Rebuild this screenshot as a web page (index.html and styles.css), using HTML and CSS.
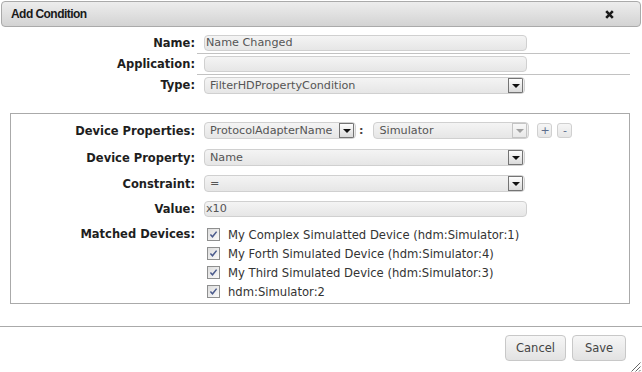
FILE: index.html
```html
<!DOCTYPE html>
<html>
<head>
<meta charset="utf-8">
<link rel="stylesheet" href="styles.css">
</head>
<body>
<div class="dialog">
  <div class="titlebar">
    <span class="title">Add Condition</span>
    <svg class="close" width="9" height="9" viewBox="0 0 9 9"><path d="M1.2 1.2L7.8 7.8M7.8 1.2L1.2 7.8" stroke="#1a1a1a" stroke-width="2.6"/></svg>
  </div>

  <div class="top-form">
    <div class="row">
      <div class="label">Name:</div>
      <div class="cell lined"><div class="input w-long">Name Changed</div></div>
    </div>
    <div class="row">
      <div class="label">Application:</div>
      <div class="cell lined"><div class="input w-long"></div></div>
    </div>
    <div class="row">
      <div class="label">Type:</div>
      <div class="cell"><div class="select w-sel"><span>FilterHDPropertyCondition</span><span class="arrow"></span></div></div>
    </div>
  </div>

  <div class="fieldset">
    <div class="frow">
      <div class="flabel">Device Properties:</div>
      <div class="fcell">
        <div class="select w-prop"><span class="clip">ProtocolAdapterName</span><span class="arrow"></span></div>
        <span class="colon">:</span>
        <div class="select w-sim"><span>Simulator</span><span class="arrow disabled"></span></div>
        <span class="mini plus">+</span>
        <span class="mini minus">-</span>
      </div>
    </div>
    <div class="frow r2">
      <div class="flabel">Device Property:</div>
      <div class="fcell"><div class="select w-sel"><span>Name</span><span class="arrow"></span></div></div>
    </div>
    <div class="frow r3">
      <div class="flabel">Constraint:</div>
      <div class="fcell"><div class="select w-sel"><span>=</span><span class="arrow"></span></div></div>
    </div>
    <div class="frow r4">
      <div class="flabel">Value:</div>
      <div class="fcell"><div class="input w-long">x10</div></div>
    </div>
    <div class="frow matched">
      <div class="flabel">Matched Devices:</div>
      <div class="fcell checks">
        <div class="check"><svg width="13" height="13" viewBox="0 0 13 13"><defs><linearGradient id="g" x1="0" y1="0" x2="1" y2="1"><stop offset="0" stop-color="#dcdcdc"/><stop offset="1" stop-color="#fbfbfb"/></linearGradient></defs><rect x="0.5" y="0.5" width="12" height="12" fill="url(#g)" stroke="#8e8f8f"/><path d="M3.4 6.4L5.5 8.8L9.6 3.6" fill="none" stroke="#4a5a8c" stroke-width="1.5"/></svg><span>My Complex Simulatted Device (hdm:Simulator:1)</span></div>
        <div class="check"><svg width="13" height="13" viewBox="0 0 13 13"><rect x="0.5" y="0.5" width="12" height="12" fill="url(#g)" stroke="#8e8f8f"/><path d="M3.4 6.4L5.5 8.8L9.6 3.6" fill="none" stroke="#4a5a8c" stroke-width="1.5"/></svg><span>My Forth Simulated Device (hdm:Simulator:4)</span></div>
        <div class="check"><svg width="13" height="13" viewBox="0 0 13 13"><rect x="0.5" y="0.5" width="12" height="12" fill="url(#g)" stroke="#8e8f8f"/><path d="M3.4 6.4L5.5 8.8L9.6 3.6" fill="none" stroke="#4a5a8c" stroke-width="1.5"/></svg><span>My Third Simulated Device (hdm:Simulator:3)</span></div>
        <div class="check"><svg width="13" height="13" viewBox="0 0 13 13"><rect x="0.5" y="0.5" width="12" height="12" fill="url(#g)" stroke="#8e8f8f"/><path d="M3.4 6.4L5.5 8.8L9.6 3.6" fill="none" stroke="#4a5a8c" stroke-width="1.5"/></svg><span>hdm:Simulator:2</span></div>
      </div>
    </div>
  </div>

  <div class="footer">
    <button class="btn w-cancel">Cancel</button>
    <button class="btn w-save">Save</button>
  </div>

  <svg class="resize" width="12" height="12" viewBox="0 0 12 12"><path d="M11.5 2.5L2.5 11.5M11.5 6.5L6.5 11.5M11.5 10L10 11.5" stroke="#666" stroke-width="1"/></svg>
</div>
</body>
</html>
```

FILE: styles.css
```css
* { box-sizing: border-box; }

body {
  margin: 0;
  width: 642px;
  height: 372px;
  overflow: hidden;
  background: #fff;
  font-family: "DejaVu Sans", Verdana, sans-serif;
  font-size: 11.2px;
  color: #333;
}

.dialog {
  position: relative;
  width: 642px;
  height: 372px;
}

.titlebar {
  margin: 1px 1px 0;
  height: 26px;
  border: 1px solid #aaa;
  border-radius: 4px;
  background: linear-gradient(#ededed, #d3d3d3);
  display: flex;
  align-items: center;
  justify-content: space-between;
  padding: 0 26px 0 9px;
}

.title {
  font-family: "Liberation Sans", Arial, sans-serif;
  font-weight: bold;
  font-size: 12px;
  letter-spacing: -0.55px;
  color: #1a1a1a;
}

.close { display: block; }

.top-form { margin-top: 6px; }

.row {
  display: flex;
  height: 21px;
}

.label {
  width: 195px;
  text-align: right;
  font-weight: bold;
  font-size: 11.5px;
  color: #1e1e1e;
  align-self: center;
  margin-top: -1px;
}

.cell {
  margin-left: 2px;
  width: 433px;
  padding-left: 7px;
  display: flex;
  align-items: center;
}

.cell.lined { border-bottom: 1px solid #c2c2c2; }

.input {
  height: 16px;
  border: 1px solid #d0d0d0;
  border-radius: 4px;
  background: linear-gradient(#f4f4f4, #e6e6e6);
  color: #555;
  padding-left: 1px;
  line-height: 14px;
  white-space: nowrap;
}

.w-long { width: 323px; }

.select {
  height: 17px;
  border: 1px solid #d0d0d0;
  border-radius: 4px;
  background: linear-gradient(#f4f4f4, #e6e6e6);
  color: #555;
  display: flex;
  align-items: center;
  justify-content: space-between;
  padding: 0 1px 0 5px;
  white-space: nowrap;
  overflow: hidden;
}

.w-sel { width: 321px; }
.w-prop { width: 152px; }
.w-sim { width: 156px; }

.clip { overflow: hidden; }

.arrow {
  flex: none;
  width: 15px;
  height: 15px;
  border: 1px solid #747474;
  background: linear-gradient(#fefefe, #dadada);
  display: flex;
  align-items: center;
  justify-content: center;
}

.arrow::after {
  content: "";
  border-left: 4px solid transparent;
  border-right: 4px solid transparent;
  border-top: 4px solid #111;
  margin-top: 1px;
}

.arrow.disabled {
  border-color: #c4c4c4;
  background: linear-gradient(#f8f8f8, #e8e8e8);
}

.arrow.disabled::after { border-top-color: #a0a0a0; }

.fieldset {
  margin: 17px 0 0 10px;
  width: 620px;
  height: 191px;
  border: 1px solid #aaa;
  padding-top: 8px;
}

.frow {
  display: flex;
  align-items: center;
}

.r2 { margin-top: 10px; }
.r3 { margin-top: 9px; }
.r4 { margin-top: 9px; }

.flabel {
  width: 184px;
  text-align: right;
  font-weight: bold;
  font-size: 11.5px;
  color: #1e1e1e;
}

.fcell {
  margin-left: 9px;
  display: flex;
  align-items: center;
}

.colon {
  font-weight: bold;
  color: #444;
  padding: 0 10px 0 3px;
}

.mini {
  width: 15px;
  height: 15px;
  border: 1px solid #d0d0d0;
  border-radius: 3px;
  background: linear-gradient(#f6f6f6, #e6e6e6);
  display: flex;
  align-items: center;
  justify-content: center;
  color: #5b6c8c;
  font-size: 11px;
  line-height: 1;
}

.plus { margin-left: 8px; }
.minus { margin-left: 5px; }

.matched {
  align-items: flex-start;
  margin-top: 8px;
}

.matched .flabel { line-height: 19px; }

.checks {
  flex-direction: column;
  align-items: flex-start;
}

.check {
  height: 19px;
  display: flex;
  align-items: center;
  padding-left: 3px;
  color: #333;
  font-size: 11.6px;
}

.check svg {
  display: block;
  margin-right: 8px;
}

.footer {
  margin-top: 22px;
  border-top: 1px solid #aaa;
  padding: 8px 16px 0 0;
  display: flex;
  justify-content: flex-end;
  gap: 6px;
}

.btn {
  height: 26px;
  border: 1px solid #c8c8c8;
  border-radius: 4px;
  background: linear-gradient(#f6f6f6, #e2e2e2);
  font-family: "DejaVu Sans", Verdana, sans-serif;
  font-size: 11.5px;
  color: #444;
  padding: 0;
}

.w-cancel { width: 61px; }
.w-save { width: 54px; }

.resize {
  position: absolute;
  right: 1px;
  bottom: 1px;
  display: block;
}
```
